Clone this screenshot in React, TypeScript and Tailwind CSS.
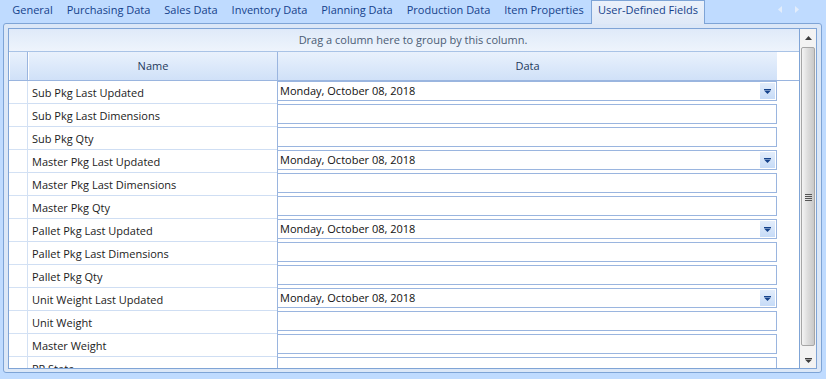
import React from 'react';

const tabs = [
  { label: 'General', w: 'w-[55px]' },
  { label: 'Purchasing Data', w: 'w-[97px]' },
  { label: 'Sales Data', w: 'w-[68px]' },
  { label: 'Inventory Data', w: 'w-[89px]' },
  { label: 'Planning Data', w: 'w-[86px]' },
  { label: 'Production Data', w: 'w-[97px]' },
  { label: 'Item Properties', w: 'w-[94px]' },
];

const rows: [string, boolean][] = [
  ['Sub Pkg Last Updated', true],
  ['Sub Pkg Last Dimensions', false],
  ['Sub Pkg Qty', false],
  ['Master Pkg Last Updated', true],
  ['Master Pkg Last Dimensions', false],
  ['Master Pkg Qty', false],
  ['Pallet Pkg Last Updated', true],
  ['Pallet Pkg Last Dimensions', false],
  ['Pallet Pkg Qty', false],
  ['Unit Weight Last Updated', true],
  ['Unit Weight', false],
  ['Master Weight', false],
  ['PP State', false],
];

const ComboArrow = ({ color = '#15428b' }: { color?: string }) => (
  <svg width="7" height="5" viewBox="0 0 7 5">
    <rect x="0" y="0" width="7" height="1" fill={color} />
    <path d="M0 1.5h7L3.5 5z" fill={color} />
  </svg>
);

const GridRow = ({ name, date }: { name: string; date: boolean }) => (
  <div className="flex h-[23px] shrink-0">
    <div className="w-[19px] border-r border-b border-[#d3e1f4] bg-white" />
    <div className="w-[249px] border-b border-[#cfdef3] bg-white pl-[4px] pt-[3px] flex items-center text-[#1b1b1b]">
      {name}
    </div>
    <div className="w-[500px] border-l border-[#9ab5df] bg-white">
      <div className="h-[20px] border-t border-r border-b border-[#9ab5df] flex items-center">
        {date && (
          <>
            <span className="pl-[2px] pt-[1px] flex-1 text-[#111]">Monday, October 08, 2018</span>
            <div className="w-[15px] h-[16px] mr-px bg-gradient-to-b from-[#e3edfb] to-[#c6dbf7] flex items-center justify-center">
              <ComboArrow />
            </div>
          </>
        )}
      </div>
    </div>
    <div className="flex-1 bg-white" />
  </div>
);

export default function App() {
  return (
    <div className="w-[826px] h-[379px] overflow-hidden bg-[#bfdbff] font-['Open_Sans',sans-serif] text-[11px]">
      <div className="flex h-[23px] pl-[5px] relative">
        {tabs.map((t) => (
          <div key={t.label} className={`${t.w} flex justify-center pt-[3px] leading-[14px] text-[#15428b]`}>
            {t.label}
          </div>
        ))}
        <div className="w-[114px] h-[24px] relative z-10 border-t border-l border-r border-[#7ea4d6] bg-gradient-to-b from-[#eaf1fb] to-[#dfe9f7] flex justify-center pt-[2px] leading-[14px] text-[#15428b]">
          User-Defined Fields
        </div>
        <div className="flex-1 flex justify-end items-start gap-[13px] pt-[6px] pr-[27px]">
          <svg width="4" height="7" viewBox="0 0 4 7">
            <path d="M4 0v7L0 3.5z" fill="#e3edfb" />
          </svg>
          <svg width="4" height="7" viewBox="0 0 4 7">
            <path d="M0 0v7l4-3.5z" fill="#e3edfb" />
          </svg>
        </div>
      </div>

      <div className="ml-[3px] w-[819px] h-[350px] border border-[#7ea4d6] rounded-[3px] bg-[#dbe7f7] pt-[4px] px-[4px]">
        <div className="h-[341px] border border-[#7fa4d6] flex bg-white">
          <div className="w-[791px] border-r border-[#7fa4d6] flex flex-col overflow-hidden">
            <div className="h-[23px] shrink-0 border-b border-[#a9c3e6] bg-gradient-to-b from-[#dfeaf9] to-[#eef4fc] flex items-center justify-center pl-[18px] text-[#4b5c74]">
              Drag a column here to group by this column.
            </div>
            <div className="flex h-[29px] shrink-0 border-b border-[#9ab5df]">
              <div className="w-[19px] border-r border-[#9ab5df] border-l border-l-white bg-gradient-to-b from-[#e9f1fc] to-[#d0e1f8]" />
              <div className="w-[249px] border-l border-white bg-gradient-to-b from-[#e9f1fc] to-[#d0e1f8] flex items-center justify-center pt-[1px] text-[#1e395b]">
                Name
              </div>
              <div className="w-[500px] border-l border-[#9ab5df] bg-gradient-to-b from-[#e9f1fc] to-[#d0e1f8] flex items-center justify-center pt-[1px] text-[#1e395b]">
                Data
              </div>
              <div className="flex-1 bg-white" />
            </div>
            {rows.map(([n, d]) => (
              <GridRow key={n} name={n} date={d} />
            ))}
          </div>

          <div className="w-[16px] flex flex-col bg-[#f3f3f3]">
            <div className="h-[17px] flex items-center justify-center">
              <svg width="7" height="4" viewBox="0 0 7 4">
                <path d="M3.5 0L7 4H0z" fill="#3c3c3c" />
              </svg>
            </div>
            <div className="mt-px h-[299px] mx-px border border-[#a6a6a6] rounded-[2px] bg-gradient-to-r from-[#f4f4f4] via-[#dcdcdc] to-[#c9c9c9] flex flex-col items-center justify-center gap-[1px] pt-[1px]">
              <div className="w-[7px] h-px bg-[#555]" />
              <div className="w-[7px] h-px bg-[#555]" />
              <div className="w-[7px] h-px bg-[#555]" />
              <div className="w-[7px] h-px bg-[#555]" />
            </div>
            <div className="flex-1 flex items-end justify-center pb-[5px]">
              <ComboArrow color="#3c3c3c" />
            </div>
          </div>
        </div>
      </div>
    </div>
  );
}
